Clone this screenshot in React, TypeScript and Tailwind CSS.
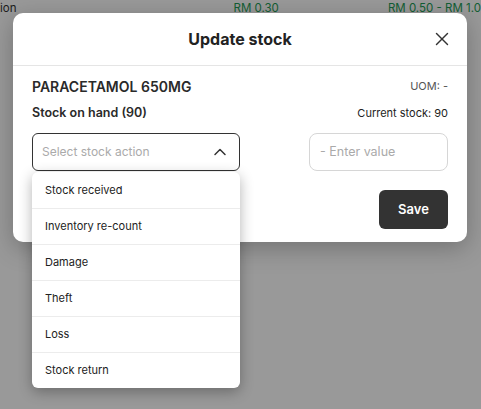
import { ChevronUp, X } from 'lucide-react'

const ACTIONS = ['Stock received', 'Inventory re-count', 'Damage', 'Theft', 'Loss', 'Stock return']

export default function App() {
  return (
    <div className="relative h-[409px] w-[481px] overflow-hidden bg-white font-['Inter',sans-serif]">
      {/* page behind the dialog */}
      <div className="flex h-[18px] items-center text-[11.5px] text-[#333]">
        <span className="w-[236px]">ion</span>
        <span className="w-[156px] text-[#1e9e57]">RM 0.30</span>
        <span className="whitespace-nowrap text-[#1e9e57]">RM 0.50 - RM 1.0</span>
      </div>

      <div className="absolute inset-0 bg-black/40" />

      <section className="absolute left-[13px] top-[13px] w-[454px] rounded-[10px] bg-white shadow-[0_6px_24px_rgba(0,0,0,0.25)]">
        <header className="relative flex h-[53px] items-center justify-center border-b border-[#e5e5e5]">
          <h2 className="text-[16px] font-bold text-[#222]">Update stock</h2>
          <button
            type="button"
            aria-label="Close"
            className="absolute right-[14px] top-1/2 -translate-y-1/2 text-[#333]"
          >
            <X size={22} strokeWidth={1.6} />
          </button>
        </header>

        <div className="px-[19px] pb-[13px] pt-[10px]">
          <div className="flex items-center justify-between">
            <span className="text-[14px] font-semibold text-[#2a2a2a]">PARACETAMOL 650MG</span>
            <span className="text-[11px] text-[#555]">UOM: -</span>
          </div>
          <div className="mt-[7px] flex items-center justify-between">
            <span className="text-[12.5px] font-semibold text-[#2a2a2a]">Stock on hand (90)</span>
            <span className="text-[11px] text-[#222]">Current stock: 90</span>
          </div>

          <div className="mt-[10px] flex items-start justify-between">
            <div className="relative">
              <button
                type="button"
                className="flex h-[38px] w-[208px] items-center justify-between rounded-[6px] border border-[#333] pl-[9px] pr-[9px] text-[12px] text-[#aaa]"
              >
                <span>Select stock action</span>
                <ChevronUp size={20} strokeWidth={1.8} className="text-[#333]" />
              </button>
              <ul className="absolute left-0 top-[39px] z-10 w-[208px] overflow-hidden rounded-[6px] bg-white shadow-[0_4px_14px_rgba(0,0,0,0.3)]">
                {ACTIONS.map((a, i) => (
                  <li
                    key={a}
                    className={`flex h-9 items-center pl-[13px] text-[11px] text-[#222] ${i > 0 ? 'border-t border-[#ececec]' : ''}`}
                  >
                    {a}
                  </li>
                ))}
              </ul>
            </div>
            <input
              placeholder="- Enter value"
              className="h-[38px] w-[139px] rounded-[8px] border border-[#d6d6d6] px-[10px] text-[12.5px] outline-none placeholder:text-[#aaa]"
            />
          </div>

          <div className="mt-[19px] flex justify-end">
            <button
              type="button"
              className="h-[39px] w-[69px] rounded-[6px] bg-[#333] text-[13px] font-semibold text-white"
            >
              Save
            </button>
          </div>
        </div>
      </section>
    </div>
  )
}
